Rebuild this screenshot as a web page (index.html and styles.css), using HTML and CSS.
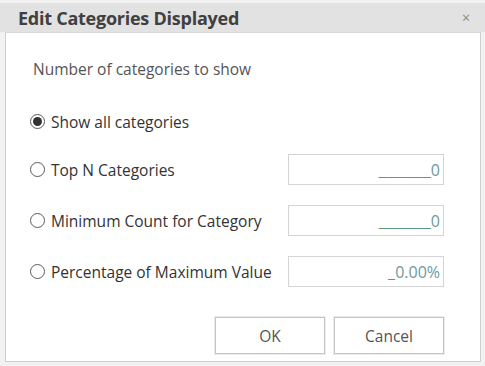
FILE: index.html
```html
<!DOCTYPE html>
<html>
<head>
<meta charset="utf-8">
<link rel="stylesheet" href="styles.css">
</head>
<body>
<div class="dialog">
  <div class="titlebar">
    <span class="title">Edit Categories Displayed</span>
    <span class="close">&#215;</span>
  </div>
  <div class="content">
    <div class="heading">Number of categories to show</div>
    <div class="row first">
      <label class="opt"><span class="radio checked"></span><span>Show all categories</span></label>
    </div>
    <div class="row second">
      <label class="opt"><span class="radio"></span><span>Top N Categories</span></label>
      <div class="field"><span class="mask wide">______</span>0</div>
    </div>
    <div class="row">
      <label class="opt"><span class="radio"></span><span>Minimum Count for Category</span></label>
      <div class="field"><span class="mask wide">______</span>0</div>
    </div>
    <div class="row">
      <label class="opt"><span class="radio"></span><span>Percentage of Maximum Value</span></label>
      <div class="field"><span class="mask">_</span>0.00%</div>
    </div>
    <div class="buttons">
      <button class="btn">OK</button>
      <button class="btn">Cancel</button>
    </div>
  </div>
</div>
</body>
</html>
```

FILE: styles.css
```css
html, body {
  margin: 0;
  padding: 0;
}
body {
  width: 485px;
  height: 366px;
  background: #f2f2f2;
  font-family: "Open Sans", "Noto Sans", sans-serif;
  overflow: hidden;
}
.dialog {
  padding-top: 3px;
}
.titlebar {
  height: 29px;
  background: #e2e2e2;
  display: flex;
  align-items: center;
  justify-content: space-between;
  padding: 0 15px 0 18px;
}
.title {
  font-weight: 700;
  font-size: 18px;
  color: #404040;
  letter-spacing: -0.25px;
}
.close {
  font-size: 14px;
  color: #8a8a8a;
}
.content {
  margin: 0 4px 0 5px;
  height: 328px;
  background: #fff;
  border: 1px solid #cfcfcf;
  border-top-color: #d8d8d8;
  display: flex;
  flex-direction: column;
  padding: 0 36px 0 24px;
}
.heading {
  margin-top: 25px;
  font-size: 15.5px;
  color: #555;
  line-height: 22px;
  padding-left: 3px;
}
.row {
  display: flex;
  align-items: center;
  justify-content: space-between;
  height: 31px;
  margin-top: 20px;
}
.row.first {
  margin-top: 26px;
}
.row.second {
  margin-top: 17px;
}
.opt {
  display: flex;
  align-items: center;
  gap: 6px;
  font-size: 15.5px;
  color: #333;
}
.radio {
  width: 15px;
  height: 15px;
  border: 1px solid #5a5a5a;
  border-radius: 50%;
  box-sizing: border-box;
  display: flex;
  align-items: center;
  justify-content: center;
  background: #fff;
}
.radio.checked::after {
  content: "";
  width: 9px;
  height: 9px;
  border-radius: 50%;
  background: #333;
}
.field {
  width: 156px;
  height: 31px;
  box-sizing: border-box;
  border: 1px solid #d4d4d4;
  display: flex;
  align-items: center;
  justify-content: flex-end;
  padding-right: 3px;
  font-size: 16px;
  color: #6a9aa0;
}
.mask {
  color: #5f9a7e;
}
.mask.wide {
  display: inline-block;
  transform: scaleX(1.25);
  transform-origin: right center;
}
.buttons {
  margin-top: auto;
  margin-bottom: 7px;
  display: flex;
  justify-content: flex-end;
  gap: 9px;
}
.btn {
  width: 110px;
  height: 37px;
  background: #fff;
  border: 1px solid #c4c4c4;
  box-shadow: 0 0 0 1px #ececec;
  font-family: inherit;
  font-size: 15.5px;
  color: #555;
  padding: 0;
}
```
